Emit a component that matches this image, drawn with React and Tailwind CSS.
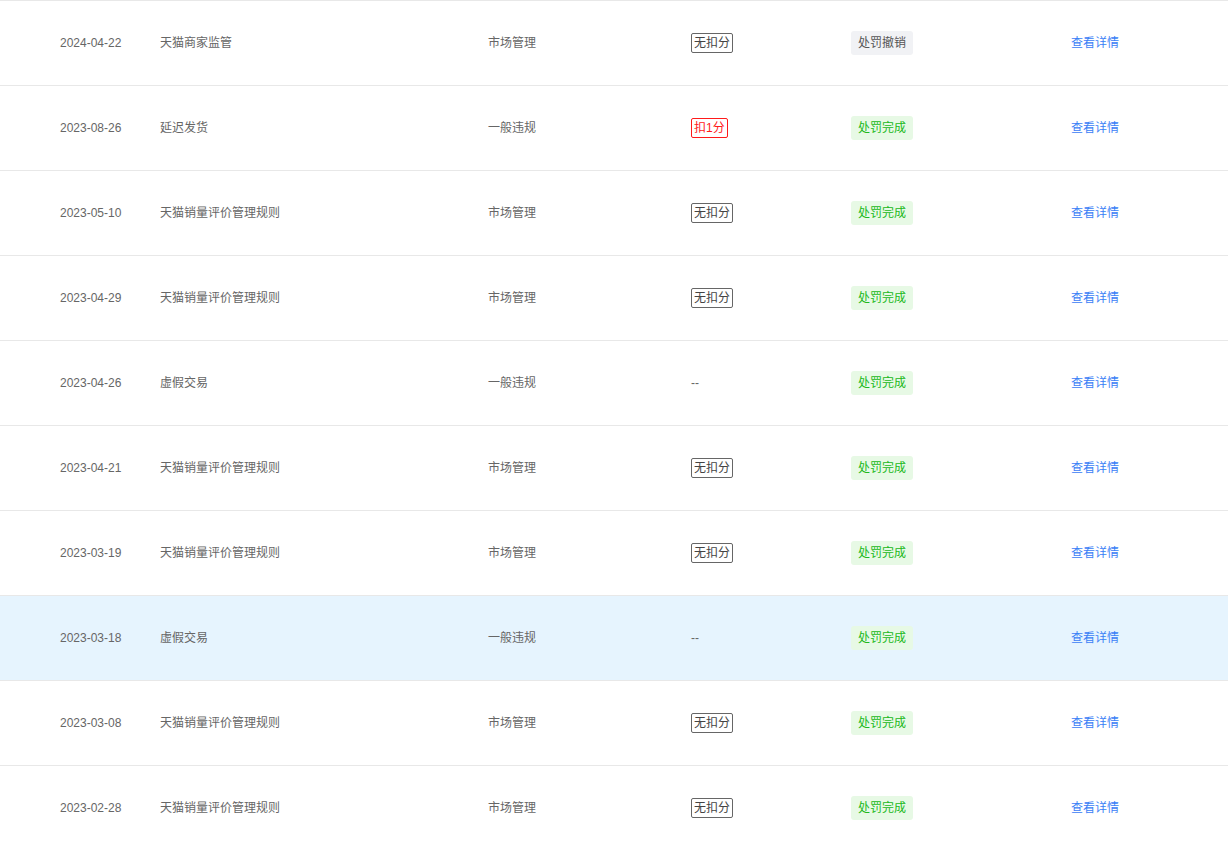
import React from 'react';

const rows = [
    { date: '2024-04-22', name: '天猫商家监管', type: '市场管理', score: 'none', status: 'revoked' },
    { date: '2023-08-26', name: '延迟发货', type: '一般违规', score: 'minus1', status: 'done' },
    { date: '2023-05-10', name: '天猫销量评价管理规则', type: '市场管理', score: 'none', status: 'done' },
    { date: '2023-04-29', name: '天猫销量评价管理规则', type: '市场管理', score: 'none', status: 'done' },
    { date: '2023-04-26', name: '虚假交易', type: '一般违规', score: 'empty', status: 'done' },
    { date: '2023-04-21', name: '天猫销量评价管理规则', type: '市场管理', score: 'none', status: 'done' },
    { date: '2023-03-19', name: '天猫销量评价管理规则', type: '市场管理', score: 'none', status: 'done' },
    { date: '2023-03-18', name: '虚假交易', type: '一般违规', score: 'empty', status: 'done', hover: true },
    { date: '2023-03-08', name: '天猫销量评价管理规则', type: '市场管理', score: 'none', status: 'done' },
    { date: '2023-02-28', name: '天猫销量评价管理规则', type: '市场管理', score: 'none', status: 'done' },
];

function Score({ kind }) {
    if (kind === 'empty') return <span className="text-[#666]">--</span>;
    if (kind === 'minus1') {
        // red outline tag for deducted points
        return (
            <span className="inline-block border border-[#ff1a1a] rounded-[2px] px-[2px] py-[1px] leading-[16px] text-[#ff1a1a]">
                扣1分
            </span>
        );
    }
    return (
        <span className="inline-block border border-[#666] rounded-[2px] px-[2px] py-[1px] leading-[16px] text-[#444]">
            无扣分
        </span>
    );
}

function Status({ kind }) {
    if (kind === 'revoked') {
        return (
            <span className="inline-block rounded-[3px] bg-[#f1f2f5] px-[7px] leading-[24px] text-[#555]">
                处罚撤销
            </span>
        );
    }
    return (
        <span className="inline-block rounded-[3px] bg-[#e7f9e5] px-[7px] leading-[24px] text-[#20b820]">
            处罚完成
        </span>
    );
}

export default function App() {
    return (
        <div
            className="w-[1228px] h-[844px] overflow-hidden bg-white text-[12px] text-[#666]"
            style={{ fontFamily: '"Liberation Sans", "Noto Sans CJK SC", sans-serif' }}
        >
            {rows.map((r, i) => (
                <div
                    key={i}
                    className={
                        'grid grid-cols-[100px_328px_203px_160px_220px_1fr] items-center h-[85px] pl-[60px] border-t border-[#e8e8e8] ' +
                        (r.hover ? 'bg-[#e6f4fe]' : 'bg-white')
                    }
                >
                    <div>{r.date}</div>
                    <div>{r.name}</div>
                    <div>{r.type}</div>
                    <div><Score kind={r.score} /></div>
                    <div><Status kind={r.status} /></div>
                    <div className="text-[#3a80f6] cursor-pointer">查看详情</div>
                </div>
            ))}
        </div>
    );
}
